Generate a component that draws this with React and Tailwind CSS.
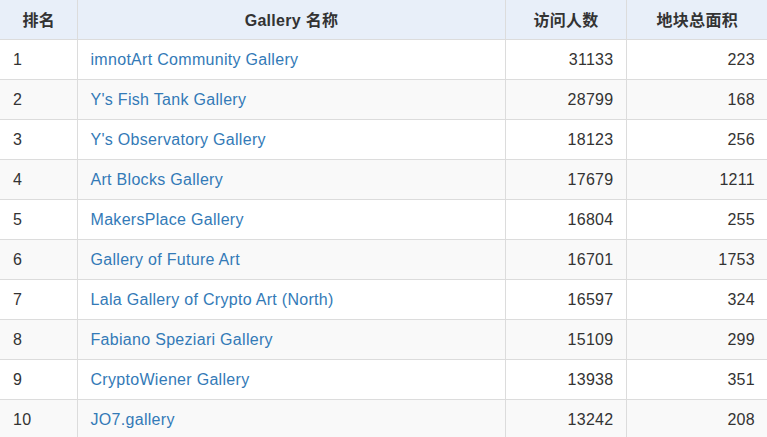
import React from 'react';

const rows = [
  { rank: 1, name: "imnotArt Community Gallery", visits: 31133, area: 223 },
  { rank: 2, name: "Y's Fish Tank Gallery", visits: 28799, area: 168 },
  { rank: 3, name: "Y's Observatory Gallery", visits: 18123, area: 256 },
  { rank: 4, name: "Art Blocks Gallery", visits: 17679, area: 1211 },
  { rank: 5, name: "MakersPlace Gallery", visits: 16804, area: 255 },
  { rank: 6, name: "Gallery of Future Art", visits: 16701, area: 1753 },
  { rank: 7, name: "Lala Gallery of Crypto Art (North)", visits: 16597, area: 324 },
  { rank: 8, name: "Fabiano Speziari Gallery", visits: 15109, area: 299 },
  { rank: 9, name: "CryptoWiener Gallery", visits: 13938, area: 351 },
  { rank: 10, name: "JO7.gallery", visits: 13242, area: 208 },
];

const App = () => {
  return (
    <div className="w-[767px] h-[437px] overflow-hidden bg-white font-['Liberation_Sans','Noto_Sans_CJK_SC',sans-serif] text-[16px] tracking-[0.3px] text-[#333]">
      <table className="w-[767px] table-fixed border-collapse">
        <colgroup>
          <col className="w-[77px]" />
          <col className="w-[428px]" />
          <col className="w-[121px]" />
          <col className="w-[141px]" />
        </colgroup>
        <thead>
          <tr className="h-[39px] bg-[#e8eff9]">
            <th className="border-r border-b border-[#dcdcdc] pl-[13px] pr-3 pt-[3px] text-center font-bold">排名</th>
            <th className="border-r border-b border-[#dcdcdc] pl-[13px] pr-3 pt-[3px] text-center font-bold">Gallery 名称</th>
            <th className="border-r border-b border-[#dcdcdc] pl-[13px] pr-3 pt-[3px] text-center font-bold">访问人数</th>
            <th className="border-b border-[#dcdcdc] pl-[13px] pr-3 pt-[3px] text-center font-bold">地块总面积</th>
          </tr>
        </thead>
        <tbody>
          {rows.map((row, i) => (
            <tr key={row.rank} className={`h-10 ${i % 2 === 1 ? 'bg-[#f9f9f9]' : 'bg-white'}`}>
              <td className="border-r border-b border-[#dcdcdc] pl-[13px] pr-3 pt-[2px]">{row.rank}</td>
              <td className="border-r border-b border-[#dcdcdc] pl-[13px] pr-3 pt-[2px]">
                <a href="#" className="text-[#337ab7]">{row.name}</a>
              </td>
              <td className="border-r border-b border-[#dcdcdc] pl-[13px] pr-3 pt-[2px] text-right">{row.visits}</td>
              <td className="border-b border-[#dcdcdc] pl-[13px] pr-3 pt-[2px] text-right">{row.area}</td>
            </tr>
          ))}
        </tbody>
      </table>
    </div>
  );
};

export default App;
